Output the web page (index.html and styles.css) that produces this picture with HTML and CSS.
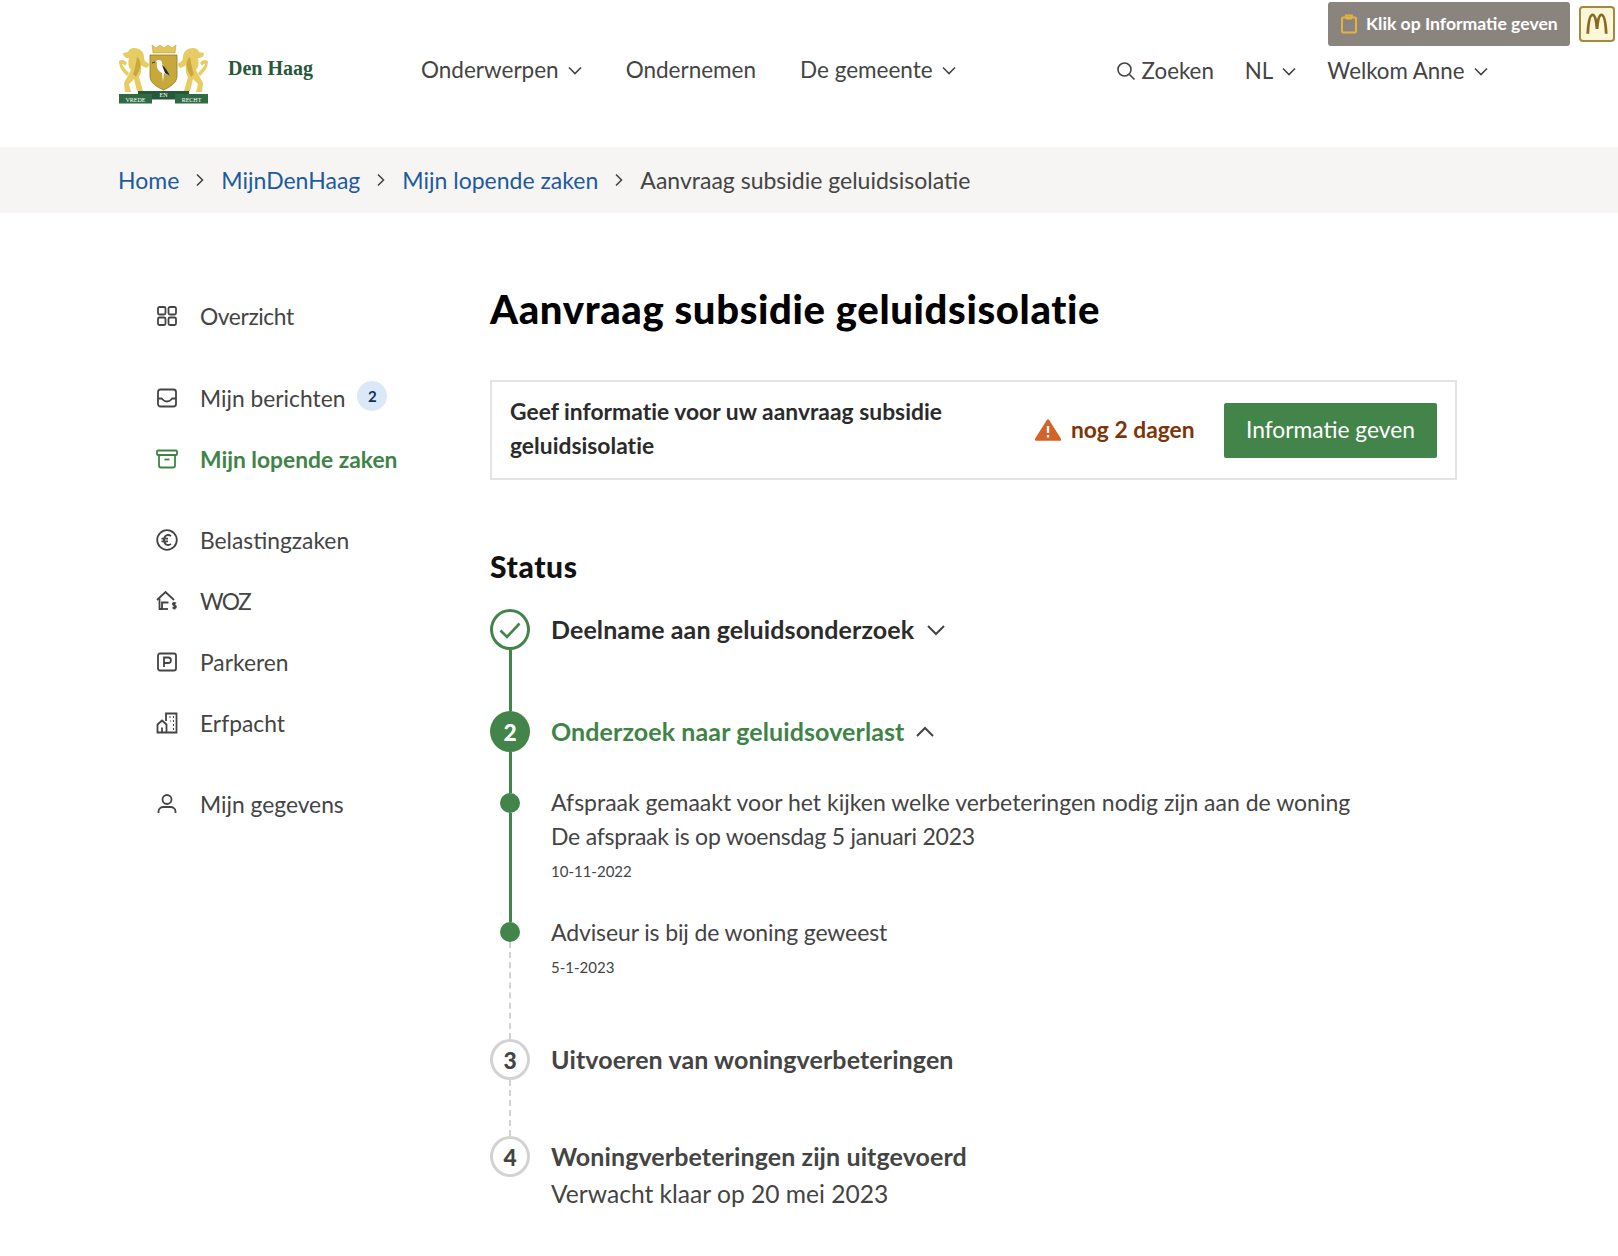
FILE: index.html
```html
<!DOCTYPE html>
<html lang="nl">
<head>
<meta charset="utf-8">
<title>Aanvraag subsidie geluidsisolatie</title>
<link rel="stylesheet" href="styles.css">
</head>
<body>
<header class="header">
  <div class="toolbar">
    <a class="hint">
      <svg class="hint-icon" viewBox="0 0 18 20" width="18" height="20" fill="none" stroke="#e5b33d" stroke-width="2"><rect x="2" y="3.500" width="14" height="15" rx="1"/><path d="M6 3.500V1.500h6v2"/><path d="M6 4.500h6" /></svg>
      <span>Klik op Informatie geven</span>
    </a>
    <a class="mc"><svg viewBox="0 0 24 24" width="26" height="26" fill="none" stroke="#8a6a1e" stroke-width="2.600"><path d="M3.500 21C4 10 5.500 3.500 8 3.500c2.600 0 3.500 7 4 13 .5-6 1.400-13 4-13 2.500 0 4 6.500 4.500 17.500"/></svg></a>
  </div>
  <div class="header-row">
    <a class="brand">
      <svg class="crest" viewBox="118 42 92 62" width="92" height="62">
        <path d="M152 44l4 3 4-3 4 3 4-3 4 3 4-3-1 8h-22z" fill="#e3c65a" stroke="#b99a2f" stroke-width=".5"/>
        <path d="M150 54h27v21c0 7-7 11-13.500 14-6.500-3-13.500-7-13.500-14z" fill="#c7a83a" stroke="#8f7a2a" stroke-width=".8"/>
        <path d="M156 60c3-2 6-1 6 2 0 3 5 5 8 13l-6-3-1 9-1-9c-4-2-6-6-5-10z" fill="#fff"/>
        <path d="M162 64c3 2 6 6 8 11l-5-3z" fill="#2c2c2c"/>
        <path d="M155 61l-3 1" stroke="#333" stroke-width="1"/>
        <g fill="#e6cc62">
          <path d="M134 47c6 0 10 4 10 9 0 3 1 5 6 7l-3 4c-3-1-5-2-6-3 1 6-1 10-2 12l4 14h-6l-3-12-5 5 2 8h-6l-1-9 7-13c-3-3-3-8-2-12-4 0-6-2-6-5l5-1c1-3 3-4 6-4z"/>
          <path d="M119 60c3-2 6-1 8 2l-2 3c-1-2-2-2-3-2 1 3 4 6 7 9l-2 3c-4-4-8-8-8-15z"/>
          <path d="M193 47c-6 0-10 4-10 9 0 3-1 5-6 7l3 4c3-1 5-2 6-3-1 6 1 10 2 12l-4 14h6l3-12 5 5-2 8h6l1-9-7-13c3-3 3-8 2-12 4 0 6-2 6-5l-5-1c-1-3-3-4-6-4z"/>
          <path d="M208 60c-3-2-6-1-8 2l2 3c1-2 2-2 3-2-1 3-4 6-7 9l2 3c4-4 8-8 8-15z"/>
        </g>
        <g fill="#c9a83e">
          <path d="M137 56c3 2 4 6 3 11-1 4-3 6-4 9l-3-3c2-5 3-11 4-17z"/>
          <path d="M190 56c-3 2-4 6-3 11 1 4 3 6 4 9l3-3c-2-5-3-11-4-17z"/>
        </g>
        <rect x="138" y="90" width="51" height="8.500" fill="#26593a"/>
        <rect x="119" y="93" width="33" height="9.500" fill="#2f6a42"/>
        <rect x="175" y="93" width="33" height="9.500" fill="#2f6a42"/>
        <text class="crest-text" x="135.500" y="100.500">VREDE</text>
        <text class="crest-text" x="163.500" y="96">EN</text>
        <text class="crest-text" x="191.500" y="100.500">RECHT</text>
      </svg>
      <span class="brand-name">Den Haag</span>
    </a>
    <nav class="main-nav">
      <a class="nav-link">Onderwerpen <svg class="chev" viewBox="0 0 14 14" width="14" height="14"><path d="M1 4.500l6 6 6-6"/></svg></a>
      <a class="nav-link">Ondernemen</a>
      <a class="nav-link">De gemeente <svg class="chev" viewBox="0 0 14 14" width="14" height="14"><path d="M1 4.500l6 6 6-6"/></svg></a>
    </nav>
    <nav class="util-nav">
      <a class="util-link search"><svg viewBox="0 0 20 20" width="20" height="20" fill="none" stroke="#444" stroke-width="1.600"><circle cx="8.500" cy="8.500" r="6.500"/><path d="M13.500 13.500l5 5"/></svg>Zoeken</a>
      <a class="util-link">NL <svg class="chev" viewBox="0 0 14 14" width="14" height="14"><path d="M1 4.500l6 6 6-6"/></svg></a>
      <a class="util-link">Welkom Anne <svg class="chev" viewBox="0 0 14 14" width="14" height="14"><path d="M1 4.500l6 6 6-6"/></svg></a>
    </nav>
  </div>
</header>

<div class="crumbs">
  <a class="crumb">Home</a>
  <svg class="crumb-sep" viewBox="0 0 10 14" width="10" height="14"><path d="M2 1.500l5.500 5.500-5.500 5.500"/></svg>
  <a class="crumb">MijnDenHaag</a>
  <svg class="crumb-sep" viewBox="0 0 10 14" width="10" height="14"><path d="M2 1.500l5.500 5.500-5.500 5.500"/></svg>
  <a class="crumb">Mijn lopende zaken</a>
  <svg class="crumb-sep" viewBox="0 0 10 14" width="10" height="14"><path d="M2 1.500l5.500 5.500-5.500 5.500"/></svg>
  <span class="crumb-current">Aanvraag subsidie geluidsisolatie</span>
</div>

<div class="layout">
  <aside class="side">
    <div class="side-group">
      <a class="side-item short"><svg class="side-icon" viewBox="0 0 20 20"><rect x="1" y="1" width="7.500" height="7.500" rx="1.500"/><rect x="11.500" y="1" width="7.500" height="7.500" rx="1.500"/><rect x="1" y="11.500" width="7.500" height="7.500" rx="1.500"/><rect x="11.500" y="11.500" width="7.500" height="7.500" rx="1.500"/></svg>Overzicht</a>
    </div>
    <div class="side-group">
      <a class="side-item"><svg class="side-icon" viewBox="0 0 20 20"><rect x="1" y="1.500" width="18" height="17" rx="2.500"/><path d="M1 10.500h3.500c1 0 1.500 3 5.500 3s4.500-3 5.500-3H19"/></svg>Mijn berichten<span class="badge">2</span></a>
      <a class="side-item active"><svg class="side-icon wide" viewBox="0 0 22 20"><rect x="1" y="1.500" width="20" height="4.500" rx="1"/><path d="M3 6v10.500c0 1 .7 2 2 2h12c1.300 0 2-1 2-2V6"/><path d="M8.500 10.500h5"/></svg>Mijn lopende zaken</a>
    </div>
    <div class="side-group">
      <a class="side-item"><svg class="side-icon wide" viewBox="0 0 22 22"><circle cx="11" cy="11" r="9.800"/><path d="M15 7c-3.500-2.200-7-.5-7 4s3.500 6.200 7 4M5.500 9.600H12M5.500 12.400H12"/></svg>Belastingzaken</a>
      <a class="side-item woz"><svg class="side-icon wide" viewBox="0 0 22 22"><path d="M1 10L9.500 2 18 10"/><path d="M3.500 8.500V19h2.500v-6.500h6.500"/><path d="M6 19h6"/><path d="M19.800 13.500c-.5-.8-3-1-3 .6s3.200 1 3.200 2.700-2.700 1.400-3.400.6M18.500 12.500v7"/></svg>WOZ</a>
      <a class="side-item"><svg class="side-icon" viewBox="0 0 20 20"><rect x="1" y="1.500" width="18" height="17" rx="2"/><path d="M7 15V5.500h4.200a2.600 2.600 0 010 5.500H7"/></svg>Parkeren</a>
      <a class="side-item"><svg class="side-icon wide" viewBox="0 0 22 22"><path d="M10 9V1.500h10.500V20.500H1.500V12.500L6 8.500l4.500 4v8"/><path d="M6 20.500v-5" /><path d="M13.500 5h1M17 5h1M14 9h.5M17 9h1M17 13h1M17 17h1" /></svg>Erfpacht</a>
    </div>
    <div class="side-group">
      <a class="side-item"><svg class="side-icon" viewBox="0 0 20 20"><circle cx="10" cy="5.500" r="4.500"/><path d="M1.500 19v-1.500c0-3 2.500-4.500 5-4.500h7c2.500 0 5 1.500 5 4.500V19"/></svg>Mijn gegevens</a>
    </div>
  </aside>

  <main class="main">
    <h1 class="title">Aanvraag subsidie geluidsisolatie</h1>

    <section class="task">
      <p class="task-text">Geef informatie voor uw aanvraag subsidie geluidsisolatie</p>
      <div class="task-due">
        <svg viewBox="0 0 26 22" width="26" height="24"><path d="M13 1.500L25 20.500H1z" fill="#d4632a" stroke="#d4632a" stroke-width="2.400" stroke-linejoin="round"/><path d="M13 7v7M13 16v2.400" stroke="#fff" stroke-width="2.400"/></svg>
        <span class="due-text">nog 2 dagen</span>
      </div>
      <a class="btn">Informatie geven</a>
    </section>

    <h2 class="status-title">Status</h2>

    <ol class="timeline">
      <li class="row row-1">
        <div class="rail"><span class="mark mark-done"><svg viewBox="0 0 24 24" width="24" height="24" fill="none" stroke="#428449" stroke-width="2.600"><path d="M2.500 12.500l6.500 6.500L21.500 5.500"/></svg></span><span class="line"></span></div>
        <div class="body"><h3 class="step-head">Deelname aan geluidsonderzoek<svg class="chev-lg" viewBox="0 0 20 12" width="20" height="12"><path d="M2 2l8 8 8-8"/></svg></h3></div>
      </li>
      <li class="row row-2">
        <div class="rail"><span class="mark mark-current">2</span><span class="line"></span></div>
        <div class="body"><h3 class="step-head current">Onderzoek naar geluidsoverlast<svg class="chev-lg" viewBox="0 0 20 12" width="20" height="12"><path d="M2 10l8-8 8 8"/></svg></h3></div>
      </li>
      <li class="row row-3">
        <div class="rail"><span class="dot"></span><span class="line"></span></div>
        <div class="body sub sub-first">
          <p class="sub-text">Afspraak gemaakt voor het kijken welke verbeteringen nodig zijn aan de woning</p>
          <p class="sub-text tight">De afspraak is op woensdag 5 januari 2023</p>
          <p class="sub-date spaced">10-11-2022</p>
        </div>
      </li>
      <li class="row row-4">
        <div class="rail"><span class="dot"></span><span class="line line-dashed"></span></div>
        <div class="body sub">
          <p class="sub-text snug">Adviseur is bij de woning geweest</p>
          <p class="sub-date spaced">5-1-2023</p>
        </div>
      </li>
      <li class="row row-5">
        <div class="rail"><span class="mark mark-todo">3</span><span class="line line-dashed"></span></div>
        <div class="body"><h3 class="step-head todo">Uitvoeren van woningverbeteringen</h3></div>
      </li>
      <li class="row row-6">
        <div class="rail"><span class="mark mark-todo">4</span></div>
        <div class="body"><h3 class="step-head todo">Woningverbeteringen zijn uitgevoerd</h3><p class="step-note">Verwacht klaar op 20 mei 2023</p></div>
      </li>
    </ol>
  </main>
</div>
</body>
</html>
```
FILE: styles.css
```css
* { box-sizing: border-box; }
html, body { margin: 0; padding: 0; }
body {
  font-family: "Lato", "Open Sans", sans-serif;
  font-size: 22.8px;
  line-height: 34px;
  color: #444;
  background: #fff;
  height: 1256px;
  overflow: hidden;
}
p, h1, h2, h3, ol { margin: 0; padding: 0; }
ol { list-style: none; }

.header { height: 147px; display: flex; flex-direction: column; }
.toolbar { display: flex; justify-content: flex-end; align-items: center; gap: 9px; padding: 2px 3px 0 0; height: 46px; }
.hint { display: flex; align-items: center; gap: 8px; height: 44px; width: 242px; padding-left: 12px; background: #8a847f; color: #fff; border-radius: 3px; font-size: 17.6px; font-weight: 700; }
.mc { display: flex; align-items: center; justify-content: center; width: 36px; height: 36px; background: #fdf6d8; border: 2px solid #a18a3c; border-radius: 4px; }
.header-row { display: flex; align-items: center; padding-left: 118px; height: 60px; margin-top: -2px; }
.brand { display: flex; align-items: center; gap: 18px; width: 303px; }
.crest { display: block; flex: none; }
.crest-text { font-family: "Liberation Serif", serif; font-size: 6px; fill: #fff; text-anchor: middle; }
.brand-name { font-family: "Liberation Serif", serif; font-size: 20px; font-weight: 700; color: #26593a; margin-bottom: 12px; }
.main-nav { display: flex; gap: 44px; align-items: center; margin-bottom: 8px; font-size: 22.5px; }
.nav-link, .util-link { display: flex; align-items: center; gap: 9px; white-space: nowrap; }
.util-nav { display: flex; align-items: center; gap: 31px; margin-left: 160px; margin-bottom: 6px; font-size: 22.3px; }
.search { gap: 6px; }
.chev { fill: none; stroke: #444; stroke-width: 1.600; }

.crumbs { height: 66px; background: #f6f5f3; padding-left: 118px; display: flex; align-items: center; gap: 16px; padding-bottom: 1px; font-size: 23px; }
.crumb { color: #1e5aa0; }
.crumb-sep { fill: none; stroke: #444; stroke-width: 1.600; }
.crumb-current { color: #444; }

.layout { display: flex; padding-top: 68px; }
.side { width: 490px; padding-left: 157px; display: flex; flex-direction: column; gap: 20px; padding-top: 5px; flex: none; }
.side-group { display: flex; flex-direction: column; }
.side-item { height: 61px; display: flex; align-items: center; white-space: nowrap; }
.short { letter-spacing: -.4px; padding-bottom: 2px; }
.woz { letter-spacing: -1.600px; }
.side-icon { width: 20px; height: 20px; margin-right: 23px; flex: none; fill: none; stroke: #444; stroke-width: 1.800; }
.wide { width: 22px; height: 22px; margin-left: -1px; margin-right: 22px; }
.active { color: #3f8446; font-weight: 700; }
.active .side-icon { stroke: #3f8446; }
.badge { display: inline-flex; width: 30px; height: 30px; border-radius: 50%; background: #dbe8f7; color: #14305a; font-size: 15px; font-weight: 700; align-items: center; justify-content: center; margin-left: 12px; margin-bottom: 4px; }

.main { width: 967px; }
.title { font-size: 40px; line-height: 48px; font-weight: 900; letter-spacing: .65px; color: #000; margin-bottom: 47px; padding-top: 4px; }
.task { height: 100px; border: 2px solid #e3e3e3; display: flex; align-items: center; padding: 0 18px; }
.task-text { width: 525px; font-weight: 700; color: #2b2b2b; flex: none; margin-bottom: 4px; letter-spacing: .03px; }
.task-due { display: flex; align-items: center; gap: 10px; color: #7f3408; font-weight: 700; width: 189px; flex: none; }
.due-text { padding-bottom: 3px; }
.btn { width: 213px; height: 55px; display: flex; align-items: center; justify-content: center; background: #428449; color: #fff; border-radius: 2px; padding-bottom: 2px; }
.status-title { font-size: 30px; line-height: 36px; font-weight: 900; letter-spacing: .6px; color: #111; margin-top: 68px; margin-bottom: 25px; }

.row { display: grid; grid-template-columns: 40px 1fr; column-gap: 21px; }
.row-1 { height: 102px; }
.row-2 { height: 82px; }
.row-3 { height: 129px; }
.row-4 { height: 117px; }
.row-5 { height: 97px; }
.rail { display: flex; flex-direction: column; align-items: center; }
.mark { width: 40px; height: 41px; border-radius: 50%; display: flex; align-items: center; justify-content: center; font-weight: 900; flex: none; }
.mark-done { border: 3px solid #428449; }
.mark-current { background: #428449; color: #fff; }
.mark-todo { border: 3px solid #d2d2d2; color: #444; }
.dot { width: 20px; height: 20px; border-radius: 50%; background: #428449; flex: none; }
.line { flex: 1; width: 3px; background: #428449; }
.line-dashed { width: 0; background: none; border-left: 2px dashed #d2d2d2; }
.step-head { font-size: 25px; line-height: 41px; font-weight: 700; letter-spacing: .1px; color: #2b2b2b; display: flex; align-items: center; gap: 12px; padding-bottom: 2px; }
.chev-lg { fill: none; stroke: #444; stroke-width: 2; }
.current { color: #3f8446; gap: 10px; }
.todo { color: #444; }
.step-note { font-size: 24.6px; line-height: 34px; margin-top: -2px; }
.sub { margin-top: -7px; }
.sub-first { margin-top: -8px; }
.sub-text { font-size: 23px; }
.tight { letter-spacing: -.23px; }
.snug { letter-spacing: -.12px; }
.sub-date { font-size: 15px; }
.spaced { margin-top: 1px; }
```
